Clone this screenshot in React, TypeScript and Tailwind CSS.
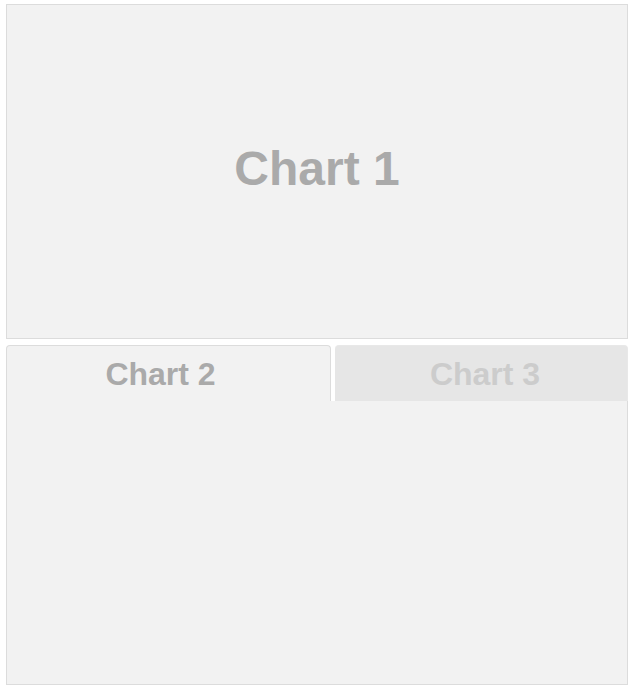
export default function App() {
  return (
    <div className="w-[635px] h-[692px] bg-white pt-[4px] pl-[6px]" style={{ fontFamily: '"Liberation Sans", Arial, sans-serif' }}>
      {/* Chart 1 */}
      <div className="w-[622px] h-[335px] border border-[#dcdcdc] bg-[#f2f2f2] flex items-center justify-center">
        <span className="text-[48px] font-bold text-[#aaaaaa] leading-none -mt-[6px]">Chart 1</span>
      </div>

      {/* Tabs */}
      <div className="w-[622px] mt-[6px] flex flex-col">
        <div className="flex h-[56px]">
          <div className="w-[325px] pr-[16px] rounded-t-[4px] border-l border-t border-r border-[#dcdcdc] bg-[#f2f2f2] flex items-center justify-center">
            <span className="text-[32px] font-bold text-[#aaaaaa] leading-none">Chart 2</span>
          </div>
          <div className="w-[4px] bg-white" />
          <div className="flex-1 pl-[8px] rounded-t-[4px] bg-[#e6e6e6] border-t border-r border-[#e8e8e8] flex items-center justify-center">
            <span className="text-[32px] font-bold text-[#cccccc] leading-none">Chart 3</span>
          </div>
        </div>
        <div className="h-[284px] border-l border-r border-b border-[#dcdcdc] bg-[#f2f2f2]" />
      </div>
    </div>
  );
}
